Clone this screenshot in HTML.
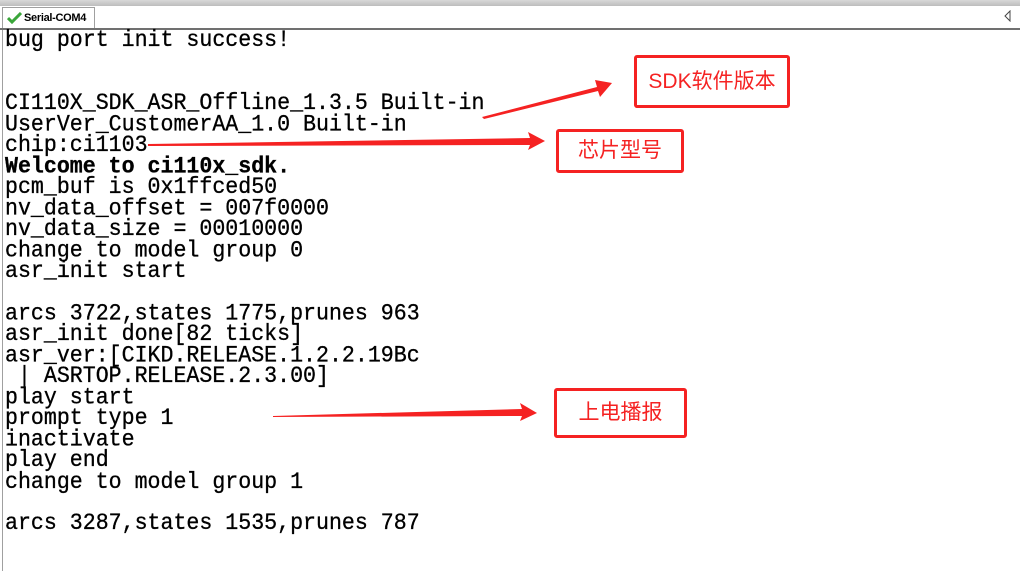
<!DOCTYPE html>
<html><head><meta charset="utf-8"><style>
html,body{margin:0;padding:0;width:1020px;height:571px;overflow:hidden;background:#fff;position:relative}
.top{position:absolute;left:0;top:0;width:1020px;height:6px;background:linear-gradient(#d8d8d8,#bdbdbd)}
.tabbar{position:absolute;left:0;top:6px;width:1020px;height:22px;background:#fff}
.tab{position:absolute;left:2px;top:7px;width:91px;height:21px;border:1px solid #a0a0a0;border-bottom:none;background:#fff;font:bold 11px "Liberation Sans",sans-serif;}
.tab span{position:absolute;left:21px;top:4px;color:#000;letter-spacing:-0.3px}
.line{position:absolute;left:0;top:28px;width:1020px;height:2px;background:#707070}
.lb{position:absolute;left:2px;top:30px;width:1px;height:541px;background:#a0a0a0}
pre{position:absolute;left:5px;top:31px;margin:0;font:21.6px/19.45px "Liberation Mono",monospace;color:#000;transform:scaleY(1.08);transform-origin:0 0;-webkit-text-stroke:0.3px #000}
b{font-weight:bold}
.box{position:absolute;border:3px solid #f52222;border-radius:3px;color:#f52222;font:21px "Liberation Sans","Noto Sans CJK SC",sans-serif;box-sizing:border-box;text-align:center}
</style></head><body>
<div class="top"></div>
<div class="tabbar"></div>
<div class="tab"><svg style="position:absolute;left:4px;top:4px" width="15" height="12"><path d="M1 6 L5 10 L14 1" stroke="#3aa63a" stroke-width="3" fill="none"/></svg><span>Serial-COM4</span></div>
<svg style="position:absolute;left:1003px;top:10px" width="10" height="12"><path d="M7 1 L2 6 L7 11 Z" stroke="#444" fill="none"/></svg>
<div class="line"></div>
<div class="lb"></div>
<pre>bug port init success!


CI110X_SDK_ASR_Offline_1.3.5 Built-in
UserVer_CustomerAA_1.0 Built-in
chip:ci1103
<b>Welcome to ci110x_sdk.</b>
pcm_buf is 0x1ffced50
nv_data_offset = 007f0000
nv_data_size = 00010000
change to model group 0
asr_init start

arcs 3722,states 1775,prunes 963
asr_init done[82 ticks]
asr_ver:[CIKD.RELEASE.1.2.2.19Bc
 | ASRTOP.RELEASE.2.3.00]
play start
prompt type 1
inactivate
play end
change to model group 1

arcs 3287,states 1535,prunes 787</pre>
<div class="box" style="left:634px;top:55px;width:156px;height:53px;line-height:47px">SDK软件版本</div>
<div class="box" style="left:556px;top:129px;width:128px;height:44px;line-height:38px">芯片型号</div>
<div class="box" style="left:554px;top:388px;width:133px;height:50px;line-height:44px">上电播报</div>
<svg style="position:absolute;left:0;top:0" width="1020" height="571">
<polygon points="482,117 597,87 595,80 612,83 600,97 598,91 484,119" fill="#f52222"/>
<polygon points="148,144 530,138 528,132 545,141 528,150 530,145 148,146" fill="#f52222"/>
<polygon points="273,416 522,409 520,403 537,413 520,421 522,416 273,417" fill="#f52222"/>
</svg>
</body></html>
